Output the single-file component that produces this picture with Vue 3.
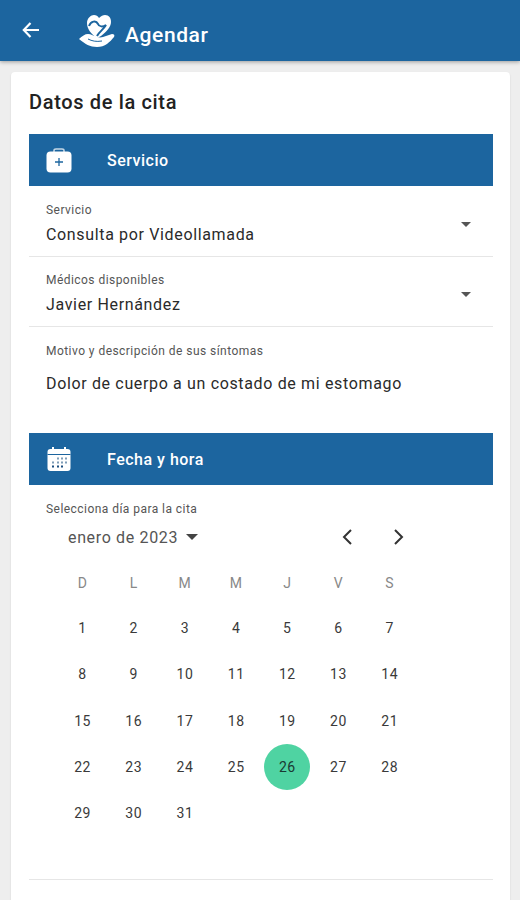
<script setup>
const days = ['D', 'L', 'M', 'M', 'J', 'V', 'S'];
const dates = Array.from({ length: 31 }, (_, i) => i + 1);
const selected = 26;
</script>

<template>
  <div class="page">
    <header class="appbar">
      <svg class="back" viewBox="0 0 24 24" width="24" height="24">
        <path d="M20 12H5M11.500 5L4.800 12l6.700 7" fill="none" stroke="#fff" stroke-width="2.200" />
      </svg>
      <svg class="logo" viewBox="0 0 36 34" width="36" height="34">
        <path d="M18 24C12 20 8 15 8 9 8 4 12 1 15 1c2 0 4 1 5 3 2-2 4-3 6-3 4 0 6 3 6 7 0 5-4 9-10 14z" fill="#fff" />
        <path d="M10 12c2-5 7-6 9-2 1 3 5 3 8 1-3 5-7 7-9 11" fill="none" stroke="#1c659f" stroke-width="2" />
        <path d="M0 25c3-3 6-5 9-5s6 2 9 3c4 1 6 0 9-1l6-2c2 0 3 1 2 3-4 5-9 10-17 10-7 0-12-3-18-8z" fill="#fff" />
        <path d="M9 25c4 2 8 3 14 2" fill="none" stroke="#1c659f" stroke-width="1" />
      </svg>
      <span class="title">Agendar</span>
    </header>

    <main class="card">
      <h1 class="heading">Datos de la cita</h1>

      <section class="band">
        <svg viewBox="0 0 26 26" width="26" height="26">
          <path d="M8 5V3.500C8 2.500 9 2 10 2h6c1 0 2 .5 2 1.500V5" fill="none" stroke="#c6d8e6" stroke-width="1.500" />
          <rect x="0.500" y="4.500" width="25" height="21" rx="4" fill="#fff" />
          <path d="M13 11v8M9 15h8" stroke="#1c659f" stroke-width="1.300" />
        </svg>
        <span>Servicio</span>
      </section>

      <div class="fields">
        <div class="field select">
          <div>
            <div class="label">Servicio</div>
            <div class="value">Consulta por Videollamada</div>
          </div>
          <i class="caret"></i>
        </div>
        <div class="field select">
          <div>
            <div class="label">Médicos disponibles</div>
            <div class="value">Javier Hernández</div>
          </div>
          <i class="caret"></i>
        </div>
        <div class="field reason">
          <div class="label">Motivo y descripción de sus síntomas</div>
          <div class="value">Dolor de cuerpo a un costado de mi estomago</div>
        </div>
      </div>

      <section class="band">
        <svg viewBox="0 0 26 26" width="26" height="26">
          <path d="M7 1v4M19 1v4" stroke="#fff" stroke-width="2" />
          <rect x="1.500" y="3" width="23" height="22" rx="3" fill="#fff" />
          <path d="M1.500 8.500h23" stroke="#1c659f" stroke-width="1" />
          <path d="M11 12.500h2M15 12.500h2M19 12.500h2M6 16.500h2M11 16.500h2M15 16.500h2M19 16.500h2" stroke="#7f9db8" stroke-width="2" />
          <path d="M6 20.500h2M11 20.500h2M15 20.500h2" stroke="#1c4f80" stroke-width="2" />
        </svg>
        <span>Fecha y hora</span>
      </section>

      <div class="label pick">Selecciona día para la cita</div>
      <div class="month">
        <span class="month-name">enero de 2023</span>
        <i class="caret month-caret"></i>
        <div class="arrows">
          <svg viewBox="0 0 16 20" width="16" height="20">
            <path d="M12 3L5 10l7 7" fill="none" stroke="#333" stroke-width="2" />
          </svg>
          <svg viewBox="0 0 16 20" width="16" height="20">
            <path d="M4 3l7 7-7 7" fill="none" stroke="#333" stroke-width="2" />
          </svg>
        </div>
      </div>

      <div class="calendar">
        <span v-for="(d, i) in days" :key="i" class="dow">{{ d }}</span>
        <span v-for="n in dates" :key="n" class="day" :class="{ active: n === selected }">{{ n }}</span>
      </div>

      <div class="rule"></div>
    </main>
  </div>
</template>

<style scoped>
.page {
  width: 520px;
  height: 900px;
  overflow: hidden;
  background: #eeeeee;
  font-family: Roboto, "Liberation Sans", sans-serif;
  color: #222;
}

.appbar {
  height: 61px;
  box-sizing: border-box;
  display: flex;
  align-items: center;
  padding: 0 0 0 19px;
  background: #1c659f;
  box-shadow: 0 1px 4px rgba(0, 0, 0, 0.35);
  color: #fff;
}

.back {
  margin-right: 36px;
  margin-top: -2px;
}

.logo {
  margin-right: 10px;
}

.title {
  margin-top: 9px;
  font-size: 21px;
  font-weight: 500;
  letter-spacing: 0.6px;
}

.card {
  width: 499px;
  height: 840px;
  box-sizing: border-box;
  margin: 11px 0 0 11px;
  padding: 0 17px 0 18px;
  background: #fff;
  border-radius: 4px;
  box-shadow: 0 1px 2px rgba(0, 0, 0, 0.12);
}

.heading {
  margin: 0;
  padding-top: 18px;
  height: 62px;
  box-sizing: border-box;
  font-size: 20px;
  line-height: 24px;
  font-weight: 500;
  letter-spacing: 0.65px;
  color: #222;
}

.band {
  height: 52px;
  display: flex;
  align-items: center;
  padding-left: 17px;
  background: #1c659f;
  color: #fff;
  font-size: 16px;
  font-weight: 500;
}

.band span {
  margin-left: 35px;
  letter-spacing: 0.5px;
}

.fields {
  padding-top: 1px;
}

.field {
  box-sizing: border-box;
  padding-left: 17px;
}

.select {
  height: 70px;
  display: flex;
  align-items: flex-start;
  justify-content: space-between;
  padding-top: 16px;
  padding-right: 22px;
  border-bottom: 1px solid #e6e6e6;
}

.select .caret {
  margin-top: 19px;
}

.label {
  font-size: 12px;
  line-height: 14px;
  letter-spacing: 0.45px;
  color: #555;
}

.value {
  font-size: 16px;
  line-height: 21px;
  letter-spacing: 0.65px;
  color: #2a2a2a;
  margin-top: 7px;
}

.reason {
  height: 106px;
  padding-top: 17px;
}

.reason .value {
  margin-top: 15px;
}

.caret {
  display: block;
  width: 0;
  height: 0;
  border-left: 5px solid transparent;
  border-right: 5px solid transparent;
  border-top: 5px solid #555;
}

.pick {
  margin: 17px 0 0 17px;
}

.month {
  height: 32px;
  display: flex;
  align-items: center;
  margin-top: 5px;
  padding-left: 39px;
}

.month-name {
  font-size: 16px;
  letter-spacing: 0.65px;
  color: #555;
}

.month-caret {
  margin-left: 8px;
  border-left-width: 6px;
  border-right-width: 6px;
  border-top-width: 6px;
  border-top-color: #444;
}

.arrows {
  display: flex;
  gap: 36px;
  margin-left: 141px;
}

.calendar {
  display: grid;
  grid-template-columns: repeat(7, 51.200px);
  grid-template-rows: 45px;
  grid-auto-rows: 46.250px;
  margin: 7px 0 0 28px;
}

.calendar span {
  display: flex;
  align-items: center;
  justify-content: center;
  font-size: 14px;
  letter-spacing: 0.6px;
}

.dow {
  color: #888;
}

.day {
  color: #3a3a3a;
}

.day.active {
  justify-self: center;
  width: 46px;
  height: 46px;
  border-radius: 50%;
  background: #4fd3a2;
  color: #1a3a33;
}

.rule {
  margin-top: 43px;
  height: 1px;
  background: #e6e6e6;
}
</style>
